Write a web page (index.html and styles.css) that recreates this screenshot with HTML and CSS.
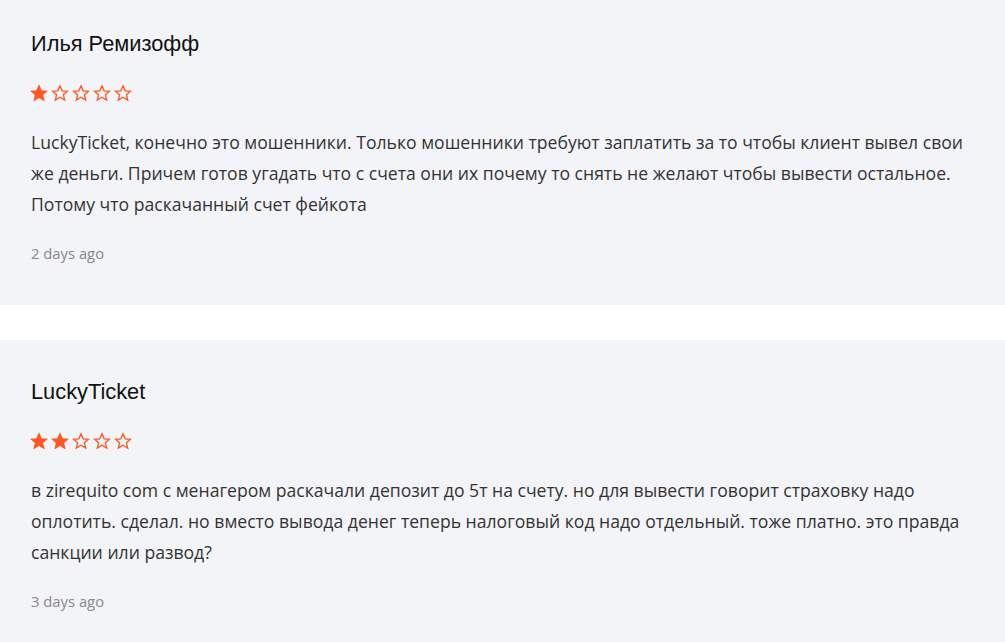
FILE: index.html
```html
<!DOCTYPE html>
<html lang="ru">
<head>
<meta charset="utf-8">
<link rel="stylesheet" href="styles.css">
</head>
<body>
<div class="list">
  <div class="review">
    <div class="name">Илья Ремизофф</div>
    <div class="stars">
      <svg class="star full" viewBox="0 0 24 24"><path d="M12 2.5l2.9 6.6 7.1.6-5.4 4.7 1.6 7-6.2-3.7-6.2 3.7 1.6-7L2 9.7l7.1-.6z"/></svg>
      <svg class="star" viewBox="0 0 24 24"><path d="M12 2.5l2.9 6.6 7.1.6-5.4 4.7 1.6 7-6.2-3.7-6.2 3.7 1.6-7L2 9.7l7.1-.6z"/></svg>
      <svg class="star" viewBox="0 0 24 24"><path d="M12 2.5l2.9 6.6 7.1.6-5.4 4.7 1.6 7-6.2-3.7-6.2 3.7 1.6-7L2 9.7l7.1-.6z"/></svg>
      <svg class="star" viewBox="0 0 24 24"><path d="M12 2.5l2.9 6.6 7.1.6-5.4 4.7 1.6 7-6.2-3.7-6.2 3.7 1.6-7L2 9.7l7.1-.6z"/></svg>
      <svg class="star" viewBox="0 0 24 24"><path d="M12 2.5l2.9 6.6 7.1.6-5.4 4.7 1.6 7-6.2-3.7-6.2 3.7 1.6-7L2 9.7l7.1-.6z"/></svg>
    </div>
    <p class="text">LuckyTicket, конечно это мошенники. Только мошенники требуют заплатить за то чтобы клиент вывел свои же деньги. Причем готов угадать что с счета они их почему то снять не желают чтобы вывести остальное. Потому что раскачанный счет фейкота</p>
    <div class="date">2 days ago</div>
  </div>
  <div class="review">
    <div class="name">LuckyTicket</div>
    <div class="stars">
      <svg class="star full" viewBox="0 0 24 24"><path d="M12 2.5l2.9 6.6 7.1.6-5.4 4.7 1.6 7-6.2-3.7-6.2 3.7 1.6-7L2 9.7l7.1-.6z"/></svg>
      <svg class="star full" viewBox="0 0 24 24"><path d="M12 2.5l2.9 6.6 7.1.6-5.4 4.7 1.6 7-6.2-3.7-6.2 3.7 1.6-7L2 9.7l7.1-.6z"/></svg>
      <svg class="star" viewBox="0 0 24 24"><path d="M12 2.5l2.9 6.6 7.1.6-5.4 4.7 1.6 7-6.2-3.7-6.2 3.7 1.6-7L2 9.7l7.1-.6z"/></svg>
      <svg class="star" viewBox="0 0 24 24"><path d="M12 2.5l2.9 6.6 7.1.6-5.4 4.7 1.6 7-6.2-3.7-6.2 3.7 1.6-7L2 9.7l7.1-.6z"/></svg>
      <svg class="star" viewBox="0 0 24 24"><path d="M12 2.5l2.9 6.6 7.1.6-5.4 4.7 1.6 7-6.2-3.7-6.2 3.7 1.6-7L2 9.7l7.1-.6z"/></svg>
    </div>
    <p class="text">в zirequito com с менагером раскачали депозит до 5т на счету. но для вывести говорит страховку надо оплотить. сделал. но вместо вывода денег теперь налоговый код надо отдельный. тоже платно. это правда санкции или развод?</p>
    <div class="date">3 days ago</div>
  </div>
</div>
</body>
</html>
```
FILE: styles.css
```css
html, body {
  margin: 0;
  padding: 0;
  background: #ffffff;
}
body {
  overflow: hidden;
}
.list {
  display: flex;
  flex-direction: column;
  gap: 35px;
  margin-top: -8px;
}
.review {
  background: #f3f4f8;
  padding: 32px 30px 42px 30px;
}
.name {
  font-family: "Liberation Sans", Arial, sans-serif;
  font-size: 21.8px;
  line-height: 40px;
  color: #111111;
  padding-left: 1px;
}
.stars {
  display: flex;
  gap: 3px;
  height: 18px;
  margin-top: 20px;
}
.star {
  width: 18px;
  height: 18px;
  fill: none;
  stroke: #ff5722;
  stroke-width: 1.8;
  stroke-linejoin: miter;
}
.star.full {
  fill: #ff5722;
}
.text {
  margin: 25px 0 0;
  padding-left: 1px;
  font-family: "Open Sans", sans-serif;
  font-size: 17.6px;
  line-height: 31px;
  color: #333333;
}
.date {
  margin-top: 23px;
  padding-left: 1px;
  font-family: "Open Sans", sans-serif;
  font-size: 14.8px;
  line-height: 20px;
  color: #888888;
}
```
